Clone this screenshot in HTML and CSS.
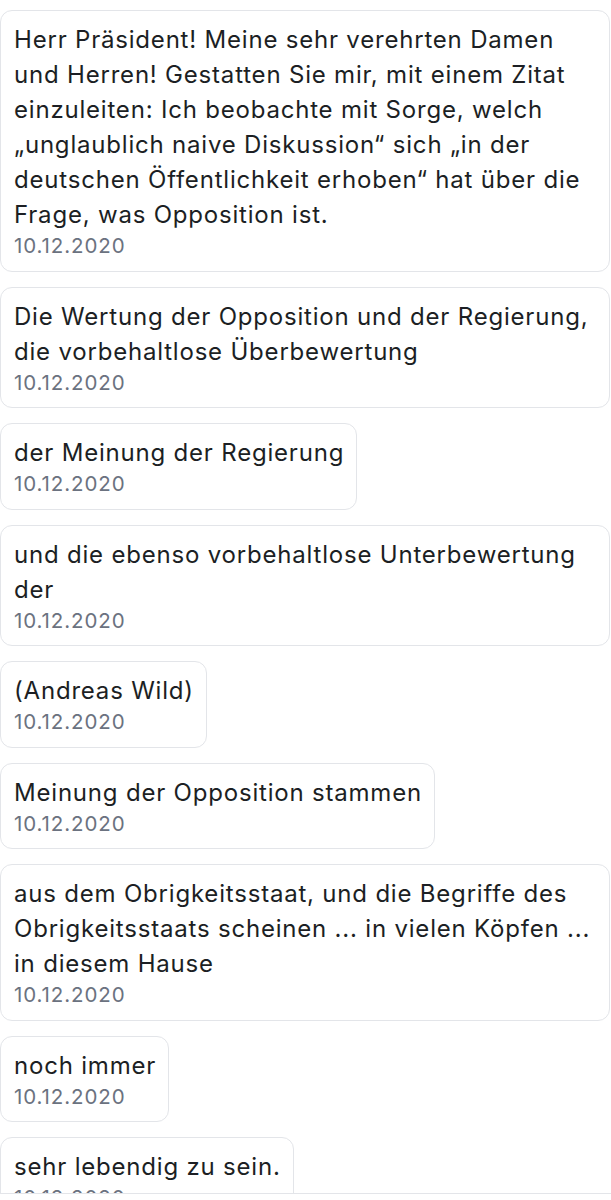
FILE: index.html
```html
<!DOCTYPE html>
<html lang="de">
<head>
<meta charset="utf-8">
<title>Nachrichten</title>
<link rel="stylesheet" href="styles.css">
</head>
<body>
<main class="feed">
  <div class="msg"><p class="text">Herr Präsident! Meine sehr verehrten Damen und Herren! Gestatten Sie mir, mit einem Zitat einzuleiten: Ich beobachte mit Sorge, welch „unglaublich naive Diskussion“ sich „in der deutschen Öffentlichkeit erhoben“ hat über die Frage, was Opposition ist.</p><span class="date">10.12.2020</span></div>
  <div class="msg"><p class="text">Die Wertung der Opposition und der Regierung, die vorbehaltlose Überbewertung</p><span class="date">10.12.2020</span></div>
  <div class="msg"><p class="text">der Meinung der Regierung</p><span class="date">10.12.2020</span></div>
  <div class="msg"><p class="text">und die ebenso vorbehaltlose Unterbewertung der</p><span class="date">10.12.2020</span></div>
  <div class="msg"><p class="text">(Andreas Wild)</p><span class="date">10.12.2020</span></div>
  <div class="msg"><p class="text">Meinung der Opposition stammen</p><span class="date">10.12.2020</span></div>
  <div class="msg"><p class="text">aus dem Obrigkeitsstaat, und die Begriffe des Obrigkeitsstaats scheinen ... in vielen Köpfen ... in diesem Hause</p><span class="date">10.12.2020</span></div>
  <div class="msg"><p class="text">noch immer</p><span class="date">10.12.2020</span></div>
  <div class="msg"><p class="text">sehr lebendig zu sein.</p><span class="date">10.12.2020</span></div>
</main>
<div class="bottom-bar"></div>
</body>
</html>
```
FILE: styles.css
```css
html, body {
  margin: 0;
  padding: 0;
  background: #ffffff;
}
body {
  font-family: Inter, "Noto Sans", "Liberation Sans", sans-serif;
  color: #1c1f24;
}
.feed {
  display: flex;
  flex-direction: column;
  align-items: flex-start;
  gap: 15px;
  padding: 10px 1px 40px 0;
}
.msg {
  display: flex;
  flex-direction: column;
  max-width: 610px;
  box-sizing: border-box;
  border: 1px solid #e3e5e9;
  border-radius: 12px;
  padding: 11px 12px 10.5px 13px;
  background: #ffffff;
}
.text {
  margin: 0;
  font-size: 24px;
  line-height: 35px;
  letter-spacing: 0.8px;
}
.date {
  font-size: 20.5px;
  line-height: 28px;
  letter-spacing: 0.9px;
  color: #6b7280;
}
.bottom-bar {
  position: fixed;
  left: 0;
  right: 0;
  top: 1193px;
  bottom: 0;
  background: #ffffff;
  border-top: 1px solid #e3e5e9;
}
```
